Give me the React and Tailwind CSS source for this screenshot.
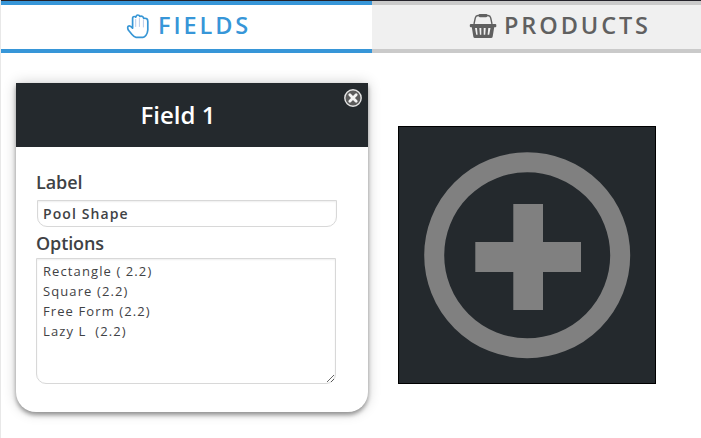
function HandIcon() {
  return (
    <svg className="mr-[9px] h-[26px] w-[24px] shrink-0" viewBox="0 0 24 26" fill="none" strokeLinecap="round" strokeLinejoin="round">
      <path d="M9.7 6.5v7M13.4 5.5v8M17.4 7v7" stroke="#b9cbea" strokeWidth="1" />
      <path d="M6.6 15.2V5.4Q6.6 3.5 8.2 3.5T9.8 4.2Q10.2 2 11.8 2T13.7 3.4Q17.2 2.4 17.7 5.4Q21.8 4.6 21.8 8.5V17Q21.5 20.5 20 22.2Q18.6 24.3 17 24.3H10Q8.2 24.2 6 21.5L2.5 17.3Q1 14.4 2.3 13.2Q4 12 6.6 15.2Z" stroke="#3796d5" strokeWidth="1.7" />
    </svg>
  );
}

function BasketIcon() {
  return (
    <svg className="mr-[7px] h-[26px] w-[28px] shrink-0" viewBox="0 0 28 26" fill="#606060">
      <path d="M5 11L6.3 4.8Q6.8 2.6 9 2.5H19Q21.2 2.6 21.7 4.8L23 11" fill="none" stroke="#606060" strokeWidth="1.4" />
      <rect x="9.5" y="1" width="9" height="3.2" rx="1.4" />
      <rect x="0.8" y="11" width="26.5" height="3.2" rx="1" />
      <path fillRule="evenodd" d="M2.6 13H25.4L23.7 23.5Q23.5 25 22 25H6Q4.5 25 4.3 23.5ZM6 15L7.2 21.8H8.6L8 15ZM10.4 15L10.9 21.8H12.3V15ZM14.7 15V21.8H16.2L16.7 15ZM19.3 15L18.6 21.8H20.2L21.5 15Z" />
    </svg>
  );
}

function CloseIcon() {
  return (
    <svg className="absolute right-[6px] top-[6px] h-[18px] w-[18px]" viewBox="0 0 18 18">
      <circle cx="9" cy="9" r="8.2" fill="#5c5c5c" stroke="#e4e4e4" strokeWidth="1.4" />
      <path d="M5.8 5.8l6.4 6.4M12.2 5.8l-6.4 6.4" stroke="#f4f4f4" strokeWidth="2.8" strokeLinecap="round" />
    </svg>
  );
}

export default function App() {
  return (
    <div className="h-[438px] w-[701px] overflow-hidden border-l border-[#e8e8e8] bg-white font-['Open_Sans','Noto_Sans',sans-serif] text-[#3f4245]">
      <nav className="flex h-[53px] border-t border-[#24222a] text-[23.5px] font-semibold leading-none tracking-[2.9px]">
        <div className="flex w-[371px] shrink-0 items-center border-y-4 border-[#3796d8] bg-white pb-[3px] pl-[125px] text-[#3796d8]">
          <HandIcon />
          <span className="-ml-px">FIELDS</span>
        </div>
        <div className="flex flex-1 items-center border-y-4 border-[#cacaca] bg-[#f0f0f0] pb-[3px] pl-[97px] text-[#606060]">
          <BasketIcon />
          <span>PRODUCTS</span>
        </div>
      </nav>
      <main className="flex items-start pl-[15px] pt-[30px]">
        <section className="relative h-[329px] w-[352px] shrink-0 rounded-b-[20px] bg-white shadow-[0_3px_4px_rgba(0,0,0,0.36),0_0_14px_rgba(0,0,0,0.2)]">
          <header className="flex h-16 items-center justify-center bg-[#24292d] pr-7 text-[24px] font-semibold text-white">
            <h2>Field 1</h2>
          </header>
          <CloseIcon />
          <div className="flex flex-col pl-5 pt-[23px]">
            <label className="h-[30px] text-[18px] font-semibold leading-[25px] tracking-[-0.1px]">Label</label>
            <input
              className="ml-px h-[27px] w-[300px] rounded-b-[10px] border border-[#d8d8d8] bg-white px-[5px] text-[14px] font-semibold tracking-[1.1px] shadow-[inset_0_1px_2px_rgba(0,0,0,0.07)] outline-none"
              defaultValue="Pool Shape"
            />
            <label className="h-[31px] pt-1 text-[18px] font-semibold leading-[25px] tracking-[-0.1px]">Options</label>
            <textarea
              className="h-[126px] w-[300px] resize rounded-b-[10px] border border-[#d8d8d8] bg-white px-1.5 py-[2px] text-[13px] leading-5 tracking-[1.1px] shadow-[inset_0_1px_2px_rgba(0,0,0,0.07)] outline-none"
              defaultValue={"Rectangle ( 2.2)\nSquare (2.2)\nFree Form (2.2)\nLazy L  (2.2)"}
            />
          </div>
        </section>
        <button aria-label="Add field" className="ml-[30px] mt-[43px] h-[258px] w-[258px] shrink-0 border border-black bg-[#24292d]">
          <svg className="h-[256px] w-[256px]" viewBox="1 1 256 256">
            <circle cx="129.2" cy="129.3" r="93" fill="none" stroke="#808080" strokeWidth="20" />
            <path d="M115.3 78H145V116H183V146H145V184H115.3V146H77.3V116H115.3Z" fill="#808080" />
          </svg>
        </button>
      </main>
    </div>
  );
}
